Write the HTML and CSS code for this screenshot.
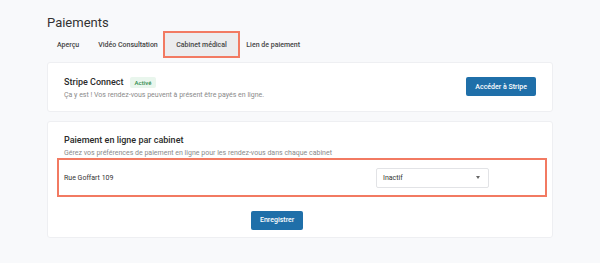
FILE: index.html
```html
<!DOCTYPE html>
<html lang="fr">
<head>
    <meta charset="UTF-8">
    <meta name="viewport" content="width=device-width, initial-scale=1.0">
    <title>Paiements</title>
    <link rel="stylesheet" href="styles.css">
</head>
<body>
    <div class="page">
        <h1>Paiements</h1>
        <div class="tabs">
            <div class="tab">Aperçu</div>
            <div class="tab">Vidéo Consultation</div>
            <div class="tab active">Cabinet médical</div>
            <div class="tab">Lien de paiement</div>
        </div>

        <div class="card card-stripe">
            <div class="card-text">
                <div class="card-title">Stripe Connect <span class="badge">Activé</span></div>
                <div class="card-sub">Ça y est ! Vos rendez-vous peuvent à présent être payés en ligne.</div>
            </div>
            <button class="btn">Accéder à Stripe</button>
        </div>

        <div class="card card-cabinets">
            <div class="card-title">Paiement en ligne par cabinet</div>
            <div class="card-sub">Gérez vos préférences de paiement en ligne pour les rendez-vous dans chaque cabinet</div>
            <div class="cabinet-row">
                <span class="cabinet-name">Rue Goffart 109</span>
                <div class="select">
                    <span>Inactif</span>
                    <span class="caret"></span>
                </div>
            </div>
            <div class="actions">
                <button class="btn">Enregistrer</button>
            </div>
        </div>
    </div>
</body>
</html>
```

FILE: styles.css
```css
body {
    margin: 0;
    background-color: #f8f9fb;
    font-family: Roboto, "Liberation Sans", Arial, sans-serif;
    color: #333;
}
.page {
    width: 506px;
    padding: 13px 0 0 47px;
}
h1 {
    margin: 0;
    font-size: 13px;
    line-height: 20px;
    font-weight: 400;
    color: #333;
}
.tabs {
    display: flex;
    margin-bottom: 6px;
}
.tab {
    height: 23px;
    line-height: 24px;
    padding: 0 9.5px;
    font-size: 7px;
    font-weight: 500;
    color: #444;
}
.tab:first-child {
    padding-left: 10px;
}
.tab.active {
    background-color: #ececee;
    box-shadow: 0 0 0 2px #f27a62;
    margin: 0 -1px 0 -2px;
    padding: 0 11px;
}
.card {
    background-color: #fff;
    border: 1px solid #eeeff2;
    border-radius: 3px;
    box-sizing: border-box;
}
.card-stripe {
    height: 50px;
    margin-bottom: 9px;
    padding: 0 16px;
    display: flex;
    align-items: center;
    justify-content: space-between;
}
.card-stripe .card-text {
    padding-top: 2px;
}
.card-title {
    font-size: 9px;
    line-height: 13px;
    font-weight: 500;
    color: #2b2b2b;
    display: flex;
    align-items: center;
}
.card-sub {
    font-size: 7px;
    line-height: 10px;
    color: #8a8a8a;
    margin-top: 1px;
}
.badge {
    margin-left: 6px;
    padding: 0 5px;
    height: 11px;
    line-height: 11px;
    font-size: 6px;
    font-weight: 500;
    color: #2f8a4c;
    background-color: #e9f6ed;
    border-radius: 2px;
}
.btn {
    background-color: #1f6fa9;
    color: #fff;
    border: none;
    border-radius: 2px;
    font-family: inherit;
    font-size: 7px;
    font-weight: 500;
    height: 19px;
    padding: 0 9px;
    cursor: pointer;
}
.card-stripe .btn {
    margin-top: -1px;
}
.card-cabinets {
    height: 117px;
    padding: 12px 16px 0 16px;
}
.cabinet-row {
    margin: 0 -11px 0 -7px;
    height: 39px;
    box-sizing: border-box;
    border: 2px solid #f27a62;
    display: flex;
    align-items: center;
    padding-left: 5px;
}
.cabinet-name {
    font-size: 7px;
    color: #333;
    width: 312px;
}
.select {
    width: 113px;
    height: 20px;
    box-sizing: border-box;
    border: 1px solid #e2e3e6;
    border-radius: 2px;
    display: flex;
    align-items: center;
    justify-content: space-between;
    padding: 0 8px 0 6px;
    font-size: 7px;
    color: #333;
}
.caret {
    width: 0;
    height: 0;
    border-left: 2.5px solid transparent;
    border-right: 2.5px solid transparent;
    border-top: 3px solid #666;
}
.actions {
    padding-left: 187px;
    margin-top: 10px;
}
```
